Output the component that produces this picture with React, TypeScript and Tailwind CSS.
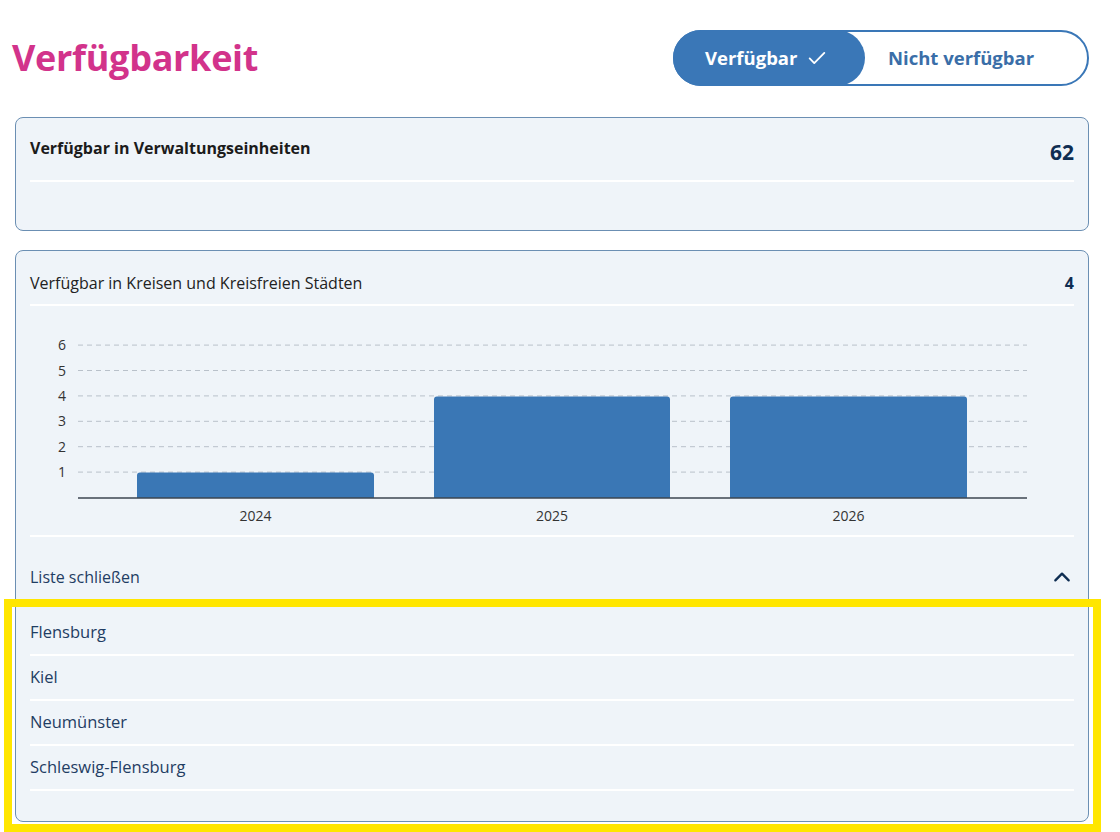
import React from "react";

const FONT = { fontFamily: "'Open Sans', Lato, 'Liberation Sans', sans-serif" };

function Chart() {
  const W = 1044;
  const H = 229;
  const y0 = 192;
  const unit = 25.4;
  const ticks = [1, 2, 3, 4, 5, 6];
  const bars = [
    { label: "2024", x: 107, w: 237, v: 1 },
    { label: "2025", x: 404, w: 236, v: 4 },
    { label: "2026", x: 700, w: 237, v: 4 },
  ];
  return (
    <svg width={W} height={H} viewBox={`0 0 ${W} ${H}`} className="block">
      {ticks.map((t) => {
        const y = y0 - t * unit - 0.5;
        return (
          <g key={t}>
            <line x1={48} x2={997} y1={y} y2={y} stroke="#b9c1ca" strokeWidth={1} strokeDasharray="5 4" />
            <text x={36} y={y + 5} textAnchor="end" fontSize={14} fill="#333" style={FONT}>
              {t}
            </text>
          </g>
        );
      })}
      {bars.map((b) => {
        const h = b.v * unit;
        const top = y0 - h;
        return (
          <g key={b.label}>
            <path
              d={`M${b.x} ${y0} L${b.x} ${top + 3} Q${b.x} ${top} ${b.x + 3} ${top} L${b.x + b.w - 3} ${top} Q${b.x + b.w} ${top} ${b.x + b.w} ${top + 3} L${b.x + b.w} ${y0} Z`}
              fill="#3a77b5"
            />
            <text x={b.x + b.w / 2} y={215} textAnchor="middle" fontSize={14} fill="#333" style={FONT}>
              {b.label}
            </text>
          </g>
        );
      })}
      <line x1={48} x2={997} y1={y0} y2={y0} stroke="#3d4650" strokeWidth={1.5} />
    </svg>
  );
}

export default function App() {
  const items = ["Flensburg", "Kiel", "Neumünster", "Schleswig-Flensburg"];
  return (
    <div className="relative w-[1120px] h-[832px] overflow-hidden bg-white" style={FONT}>
      <div className="ml-[15px] w-[1074px]">
        <div className="mt-[30px] flex h-[56px] items-center justify-between">
          <h1 className="ml-[-3px] text-[36px] font-bold leading-none tracking-[-0.3px] text-[#d2338b]">Verfügbarkeit</h1>
          <div className="flex h-[56px] w-[416px] items-stretch rounded-full border-2 border-[#3a77b7] bg-white">
            <div className="flex w-[192px] items-center rounded-full bg-[#3a77b7] pl-[32px] -ml-[2px] -my-[2px]">
              <span className="text-[18.5px] font-bold text-white">Verfügbar</span>
              <svg width="22" height="22" viewBox="0 0 24 24" className="ml-[9px]" fill="none" stroke="white" strokeWidth="2" strokeLinecap="round" strokeLinejoin="round">
                <path d="M4 12.5l5 5L20 6.5" />
              </svg>
            </div>
            <div className="flex flex-1 items-center pl-[23px]">
              <span className="text-[18.5px] font-bold text-[#3a6ea8]">Nicht verfügbar</span>
            </div>
          </div>
        </div>

        <div className="mt-[31px] rounded-[8px] border border-[#6b8fb3] bg-[#eff4f9]">
          <div className="flex h-[62px] justify-between px-[14px] pt-[20px]">
            <span className="text-[16px] font-bold leading-[20px] text-[#1b1b1b]">Verfügbar in Verwaltungseinheiten</span>
            <span className="pt-[2px] text-[21px] font-bold leading-[24px] text-[#0e2d52]">62</span>
          </div>
          <div className="mx-[14px] h-[2px] bg-white" />
          <div className="h-[48px]" />
        </div>

        <div className="mt-[19px] rounded-[8px] border border-[#6b8fb3] bg-[#eff4f9]">
          <div className="flex justify-between px-[14px] pt-[22px] pb-[11px]">
            <span className="text-[16px] leading-[20px] text-[#222]">Verfügbar in Kreisen und Kreisfreien Städten</span>
            <span className="text-[16px] font-bold leading-[20px] text-[#0e2d52]">4</span>
          </div>
          <div className="mx-[14px] h-[2px] bg-white" />
          <div className="px-[14px]">
            <Chart />
          </div>
          <div className="mx-[14px] h-[2px] bg-white" />
          <div className="flex items-center justify-between px-[14px] pt-[30px] pb-[24px]">
            <span className="text-[16px] leading-[20px] text-[#1f3d63]">Liste schließen</span>
            <svg width="20" height="20" viewBox="0 0 24 24" fill="none" stroke="#0e2d52" strokeWidth="2.8" strokeLinecap="round" strokeLinejoin="round" className="mr-[2px]">
              <path d="M4 16l8-8 8 8" />
            </svg>
          </div>
          <div className="px-[14px]">
            {items.map((it) => (
              <div key={it}>
                <div className="flex h-[43px] items-center text-[16.5px] text-[#1f3d63]">{it}</div>
                <div className="h-[2px] bg-white" />
              </div>
            ))}
          </div>
          <div className="h-[30px]" />
        </div>
      </div>

      <div className="pointer-events-none absolute left-[4px] top-[599px] h-[233px] w-[1097px] border-[8px] border-[#ffe600]" />
    </div>
  );
}
